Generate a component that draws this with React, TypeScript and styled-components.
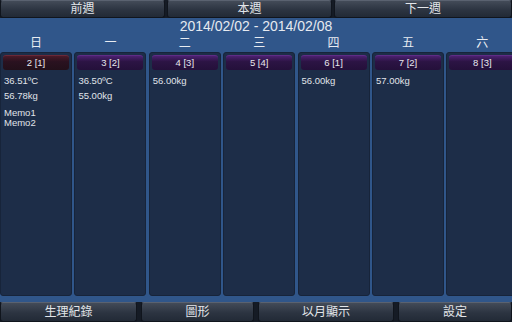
import styled, { createGlobalStyle } from "styled-components";

const GlobalStyle = createGlobalStyle`
    html, body {
        margin: 0;
        padding: 0;
        background: #2f5384;
    }
    body {
        font-family: "Liberation Sans", "Noto Sans CJK TC", sans-serif;
    }
`

const Screen = styled.div`
    width: 512px;
    height: 322px;
    display: flex;
    flex-direction: column;
    background: #30568a;
    overflow: hidden;
`
const ButtonBar = styled.div<{ $cols: string; $gap: number; $height: number }>`
    display: grid;
    grid-template-columns: ${props => props.$cols};
    column-gap: ${props => props.$gap}px;
    background: #151b25;
    height: ${props => props.$height}px;
    flex: none;
`
const BarButton = styled.button`
    border: 1px solid #10151d;
    border-top-color: #5a6270;
    border-radius: 3px;
    background: linear-gradient(#434b58, #2c3441 55%, #222a36);
    color: #e3e6ea;
    font-family: "Liberation Sans", "Noto Sans CJK TC", sans-serif;
    font-size: 12px;
    padding: 0;
    height: 100%;
    line-height: 14px;
`
const DateTitle = styled.div`
    text-align: center;
    color: #e6eaf0;
    font-size: 14px;
    line-height: 16px;
`
const WeekGrid = styled.div`
    display: grid;
    grid-template-columns: repeat(7, 72px);
    column-gap: 2.4px;
    flex: 1;
    min-height: 0;
    overflow: hidden;
`
const DayCol = styled.div`
    display: flex;
    flex-direction: column;
    min-width: 0;
`
const DayName = styled.div`
    text-align: center;
    color: #e8ecf2;
    font-size: 12px;
    line-height: 18px;
    height: 18px;
`
const DayPanel = styled.div`
    flex: 1;
    background: #1d2d48;
    border: 1px solid #17243a;
    border-radius: 3px;
    padding: 2px 2px;
    display: flex;
    flex-direction: column;
`
const DateTag = styled.div<{ $sunday?: boolean }>`
    height: 14px;
    line-height: 14px;
    border-radius: 3px;
    text-align: center;
    color: #e8e8ee;
    font-size: 9.5px;
    background: ${props => props.$sunday
        ? "linear-gradient(#4a1a28, #2a1220 40%, #22101a)"
        : "linear-gradient(#4c2070, #2c1444 40%, #24103a)"};
    border-top: 1px solid ${props => props.$sunday ? "#6a2838" : "#5e2c86"};
`
const Entry = styled.div<{ $gap: number }>`
    color: #e0e4ea;
    font-size: 9.5px;
    line-height: 10px;
    margin-top: ${props => props.$gap}px;
    padding-left: 1px;
`
const BottomStrip = styled.div`
    height: 6px;
    flex: none;
`

interface IDay {
    name: string;
    tag: string;
    temp?: string;
    weight?: string;
    memos?: string[];
}

const days: IDay[] = [
    { name: "日", tag: "2 [1]", temp: "36.51ºC", weight: "56.78kg", memos: ["Memo1", "Memo2"] },
    { name: "一", tag: "3 [2]", temp: "36.50ºC", weight: "55.00kg" },
    { name: "二", tag: "4 [3]", weight: "56.00kg" },
    { name: "三", tag: "5 [4]" },
    { name: "四", tag: "6 [1]", weight: "56.00kg" },
    { name: "五", tag: "7 [2]", weight: "57.00kg" },
    { name: "六", tag: "8 [3]" },
]

function App() {
    return (
        <Screen>
            <GlobalStyle />
            <ButtonBar $cols="165px 165px 1fr" $gap={2} $height={18}>
                <BarButton>前週</BarButton>
                <BarButton>本週</BarButton>
                <BarButton>下一週</BarButton>
            </ButtonBar>
            <DateTitle>2014/02/02 - 2014/02/08</DateTitle>
            <WeekGrid>
                {days.map((day, i) => (
                    <DayCol key={day.name}>
                        <DayName>{day.name}</DayName>
                        <DayPanel>
                            <DateTag $sunday={i === 0}>{day.tag}</DateTag>
                            {day.temp && <Entry $gap={6}>{day.temp}</Entry>}
                            {day.weight && <Entry $gap={day.temp ? 5 : 6}>{day.weight}</Entry>}
                            {day.memos?.map((m, j) => (
                                <Entry key={m} $gap={j === 0 ? 7 : 0}>{m}</Entry>
                            ))}
                        </DayPanel>
                    </DayCol>
                ))}
            </WeekGrid>
            <BottomStrip />
            <ButtonBar $cols="137px 113px 136px 1fr" $gap={4} $height={20}>
                <BarButton>生理紀錄</BarButton>
                <BarButton>圖形</BarButton>
                <BarButton>以月顯示</BarButton>
                <BarButton>設定</BarButton>
            </ButtonBar>
        </Screen>
    )
}
export default App;
